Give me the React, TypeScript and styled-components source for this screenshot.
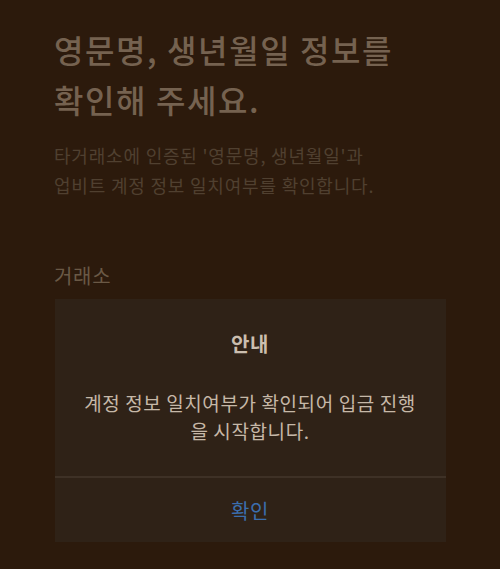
import React from 'react';
import styled, { createGlobalStyle } from 'styled-components';

const GlobalStyle = createGlobalStyle`
  html, body {
    margin: 0;
    padding: 0;
    background: #2c1a0c;
  }
  body {
    font-family: 'Noto Sans CJK KR', 'Noto Sans', sans-serif;
  }
`;

const StylePage = styled.div`
  position: relative;
  width: 500px;
  height: 569px;
  overflow: hidden;
  box-sizing: border-box;
  padding: 24px 54px 0;
  background: #2c1a0c;
`;

const StyleTitle = styled.h1`
  margin: 0;
  font-size: 32px;
  font-weight: 500;
  line-height: 50px;
  letter-spacing: 1.6px;
  color: #756250;
`;

const StyleDescription = styled.p`
  margin: 16px 0 0;
  font-size: 18px;
  font-weight: 400;
  line-height: 30px;
  letter-spacing: 0.8px;
  color: #504030;
`;

const StyleLabel = styled.p`
  margin: 62px 0 0;
  font-size: 20px;
  font-weight: 400;
  line-height: 28px;
  letter-spacing: 0.7px;
  color: #6a5946;
`;

const StyleOverlay = styled.div`
  position: absolute;
  inset: 0;
  display: flex;
  justify-content: center;
  align-items: flex-end;
  padding-bottom: 27px;
`;

const StyleDialog = styled.div`
  width: 391px;
  background: #2f2217;
  display: flex;
  flex-direction: column;
`;

const StyleDialogBody = styled.div`
  display: flex;
  flex-direction: column;
  align-items: center;
  padding: 31px 20px 0;
  height: 179px;
  box-sizing: border-box;
  border-bottom: 2px solid #3e3126;
`;

const StyleDialogTitle = styled.h2`
  margin: 0;
  font-size: 20px;
  font-weight: 700;
  line-height: 28px;
  letter-spacing: 0.6px;
  color: #cbbeaf;
`;

const StyleDialogText = styled.p`
  margin: 31px 0 0;
  font-size: 19px;
  font-weight: 400;
  line-height: 28px;
  letter-spacing: 0.6px;
  text-align: center;
  color: #c6b8a8;
`;

const StyleConfirm = styled.button`
  height: 64px;
  border: none;
  background: transparent;
  font-family: inherit;
  font-size: 20px;
  font-weight: 400;
  letter-spacing: 0.6px;
  color: #3b6eae;
  cursor: pointer;
`;

export default function App() {
  return (
    <StylePage>
      <GlobalStyle />
      <StyleTitle>
        영문명, 생년월일 정보를
        <br />
        확인해 주세요.
      </StyleTitle>
      <StyleDescription>
        타거래소에 인증된 '영문명, 생년월일'과
        <br />
        업비트 계정 정보 일치여부를 확인합니다.
      </StyleDescription>
      <StyleLabel>거래소</StyleLabel>
      <StyleOverlay>
        <StyleDialog>
          <StyleDialogBody>
            <StyleDialogTitle>안내</StyleDialogTitle>
            <StyleDialogText>
              계정 정보 일치여부가 확인되어 입금 진행
              <br />을 시작합니다.
            </StyleDialogText>
          </StyleDialogBody>
          <StyleConfirm type="button">확인</StyleConfirm>
        </StyleDialog>
      </StyleOverlay>
    </StylePage>
  );
}
